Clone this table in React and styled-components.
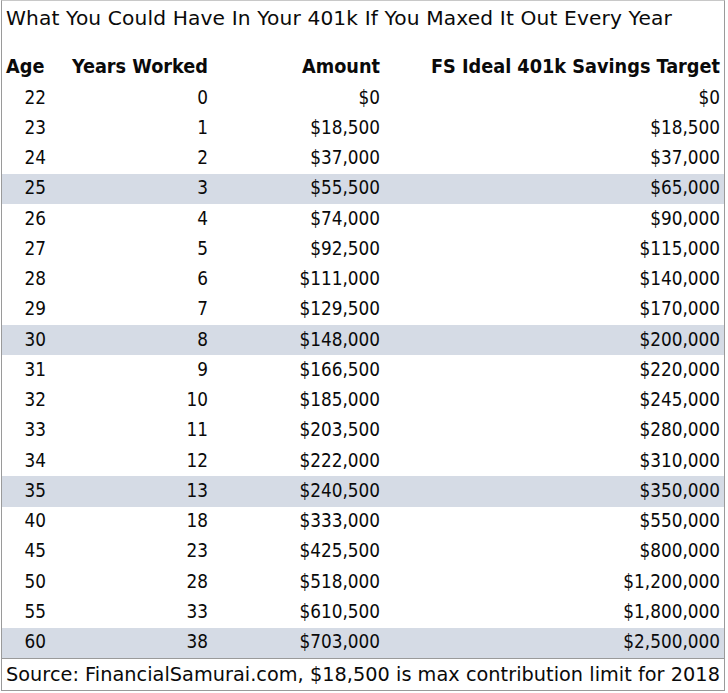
import React from 'react';
import styled, { createGlobalStyle } from 'styled-components';

const GlobalStyle = createGlobalStyle`
  body {
    margin: 0;
    background: #ffffff;
    font-family: "DejaVu Sans Condensed", "DejaVu Sans", sans-serif;
    color: #0a0a0a;
  }
`;

const Frame = styled.div`
  width: 722px;
  height: 689px;
  margin-left: 1px;
  border: 1px solid #9a9a9a;
  border-top-color: #c8c8c8;
  display: flex;
  flex-direction: column;
`;

// caption lines use the wider face, like the sheet's Tahoma text
const Title = styled.div`
  height: 34px;
  line-height: 34px;
  padding-left: 4px;
  font-family: "DejaVu Sans", sans-serif;
  font-size: 20.2px;
  letter-spacing: 0.13px;
  white-space: nowrap;
`;

const Table = styled.table`
  border-collapse: collapse;
  width: 100%;
  table-layout: fixed;
  margin-top: 14px;
`;

const HeadCell = styled.th`
  font-weight: bold;
  font-size: 19.7px;
  height: 34px;
  padding: 0 4px;
  text-align: ${(p) => p.$align || 'right'};
  white-space: nowrap;
`;

const Row = styled.tr`
  background: ${(p) => (p.$hl ? '#d5dbe5' : 'transparent')};
`;

const Cell = styled.td`
  height: 30.26px;
  padding: 0 4px;
  font-size: 18.8px;
  text-align: right;
  white-space: nowrap;
  line-height: 1;
`;

const Source = styled.div`
  margin-top: auto;
  border-top: 1px solid #9a9a9a;
  height: 32px;
  line-height: 31px;
  padding-left: 4px;
  font-family: "DejaVu Sans", sans-serif;
  font-size: 19.3px;
  letter-spacing: 0.03px;
  white-space: nowrap;
`;

const rows = [
  [22, 0, '$0', '$0'],
  [23, 1, '$18,500', '$18,500'],
  [24, 2, '$37,000', '$37,000'],
  [25, 3, '$55,500', '$65,000', true],
  [26, 4, '$74,000', '$90,000'],
  [27, 5, '$92,500', '$115,000'],
  [28, 6, '$111,000', '$140,000'],
  [29, 7, '$129,500', '$170,000'],
  [30, 8, '$148,000', '$200,000', true],
  [31, 9, '$166,500', '$220,000'],
  [32, 10, '$185,000', '$245,000'],
  [33, 11, '$203,500', '$280,000'],
  [34, 12, '$222,000', '$310,000'],
  [35, 13, '$240,500', '$350,000', true],
  [40, 18, '$333,000', '$550,000'],
  [45, 23, '$425,500', '$800,000'],
  [50, 28, '$518,000', '$1,200,000'],
  [55, 33, '$610,500', '$1,800,000'],
  [60, 38, '$703,000', '$2,500,000', true],
];

export default function App() {
  return (
    <>
      <GlobalStyle />
      <Frame>
        <Title>What You Could Have In Your 401k If You Maxed It Out Every Year</Title>
        <Table>
          <colgroup>
            <col style={{ width: 48 }} />
            <col style={{ width: 162 }} />
            <col style={{ width: 172 }} />
            <col />
          </colgroup>
          <thead>
            <tr>
              <HeadCell $align="left">Age</HeadCell>
              <HeadCell>Years Worked</HeadCell>
              <HeadCell>Amount</HeadCell>
              <HeadCell>FS Ideal 401k Savings Target</HeadCell>
            </tr>
          </thead>
          <tbody>
            {rows.map(([age, yrs, amt, target, hl]) => (
              <Row key={age} $hl={hl}>
                <Cell>{age}</Cell>
                <Cell>{yrs}</Cell>
                <Cell>{amt}</Cell>
                <Cell>{target}</Cell>
              </Row>
            ))}
          </tbody>
        </Table>
        <Source>Source: FinancialSamurai.com, $18,500 is max contribution limit for 2018</Source>
      </Frame>
    </>
  );
}
